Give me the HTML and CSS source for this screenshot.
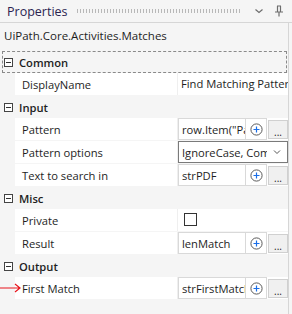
FILE: index.html
```html
<!DOCTYPE html>
<html lang="en">
  <head>
    <meta charset="UTF-8" />
    <title>Properties</title>
    <link rel="stylesheet" href="styles.css">
  </head>
  <body>
    <div class="panel">
      <div class="titlebar">
        <span class="title">Properties</span>
        <span class="grip"></span>
        <svg class="tb-icon" width="10" height="10" viewBox="0 0 10 10">
          <path d="M1.5 3.5 L5 6.5 L8.5 3.5" fill="none" stroke="#6d6d6d" stroke-width="1.2" />
        </svg>
        <svg class="tb-icon" width="10" height="12" viewBox="0 0 10 12">
          <path d="M3 1 H7 M3.5 1 V7 M6.5 1 V7 M1 7 H9 M5 7 V11.5" fill="none" stroke="#6d6d6d" stroke-width="1.2" />
        </svg>
      </div>

      <div class="typename">UiPath.Core.Activities.Matches</div>

      <div class="grid">
        <div class="category focused"><span class="toggle"></span>Common</div>
        <div class="prop">
          <div class="name">DisplayName</div>
          <div class="value"><span class="plain clip">Find Matching Patterns</span></div>
        </div>

        <div class="category"><span class="toggle"></span>Input</div>
        <div class="prop">
          <div class="name">Pattern</div>
          <div class="value">
            <span class="textbox"><span class="clip">row.Item("Pattern")</span></span>
            <span class="plus"><svg width="13" height="13" viewBox="0 0 13 13"><circle cx="6.5" cy="6.5" r="5.6" fill="none" stroke="#5a5a5a" stroke-width="1" /><path d="M6.5 3.5 V9.5 M3.5 6.5 H9.5" stroke="#1a6ee8" stroke-width="1.2" /></svg></span>
            <span class="dots">...</span>
          </div>
        </div>
        <div class="prop">
          <div class="name">Pattern options</div>
          <div class="value">
            <span class="combo">
              <span class="clip">IgnoreCase, Compiled</span>
              <svg class="caret" width="8" height="6" viewBox="0 0 8 6"><path d="M1 1.5 L4 4.5 L7 1.5" fill="none" stroke="#555" stroke-width="1" /></svg>
            </span>
          </div>
        </div>
        <div class="prop">
          <div class="name">Text to search in</div>
          <div class="value">
            <span class="textbox"><span class="clip">strPDF</span></span>
            <span class="plus"><svg width="13" height="13" viewBox="0 0 13 13"><circle cx="6.5" cy="6.5" r="5.6" fill="none" stroke="#5a5a5a" stroke-width="1" /><path d="M6.5 3.5 V9.5 M3.5 6.5 H9.5" stroke="#1a6ee8" stroke-width="1.2" /></svg></span>
            <span class="dots">...</span>
          </div>
        </div>

        <div class="category"><span class="toggle"></span>Misc</div>
        <div class="prop">
          <div class="name">Private</div>
          <div class="value"><span class="checkbox"></span></div>
        </div>
        <div class="prop">
          <div class="name">Result</div>
          <div class="value">
            <span class="textbox"><span class="clip">lenMatch</span></span>
            <span class="plus"><svg width="13" height="13" viewBox="0 0 13 13"><circle cx="6.5" cy="6.5" r="5.6" fill="none" stroke="#5a5a5a" stroke-width="1" /><path d="M6.5 3.5 V9.5 M3.5 6.5 H9.5" stroke="#1a6ee8" stroke-width="1.2" /></svg></span>
            <span class="dots">...</span>
          </div>
        </div>

        <div class="category"><span class="toggle"></span>Output</div>
        <div class="prop marked">
          <div class="name">First Match</div>
          <div class="value">
            <span class="textbox"><span class="clip">strFirstMatch</span></span>
            <span class="plus"><svg width="13" height="13" viewBox="0 0 13 13"><circle cx="6.5" cy="6.5" r="5.6" fill="none" stroke="#5a5a5a" stroke-width="1" /><path d="M6.5 3.5 V9.5 M3.5 6.5 H9.5" stroke="#1a6ee8" stroke-width="1.2" /></svg></span>
            <span class="dots">...</span>
          </div>
          <!-- flecha vermelha de anotação -->
          <svg class="arrow" width="22" height="10" viewBox="0 0 22 10">
            <path d="M0 5 H20 M15 1 L20 5 L15 9" fill="none" stroke="#e8141c" stroke-width="1.2" />
          </svg>
        </div>
      </div>
    </div>
  </body>
</html>
```

FILE: styles.css
```css
body {
  margin: 0;
  padding: 0;
  font-family: "Open Sans", "Noto Sans", sans-serif;
  font-size: 11.2px;
  color: #1e1e1e;
  background-color: #f5f5f5;
}

.panel {
  width: 292px;
  height: 314px;
  overflow: hidden;
  background-color: #f5f5f5;
}

.titlebar {
  height: 23px;
  display: flex;
  align-items: center;
  padding: 0 8px 0 7px;
  border-bottom: 1px solid #d6d6d6;
  box-sizing: border-box;
  gap: 6px;
}

.title {
  font-size: 12.5px;
  color: #2b2450;
}

.grip {
  flex: 1;
  height: 4px;
  margin: 0 4px 0 2px;
  background-image: radial-gradient(circle, #b8b8b8 0.6px, transparent 0.8px);
  background-size: 3px 2px;
}

.tb-icon {
  display: block;
  margin-left: 4px;
}

.typename {
  height: 28px;
  line-height: 26px;
  padding-left: 4px;
  font-size: 11.5px;
  border-right: 1px solid #d6d6d6;
  margin-right: 3px;
}

.grid {
  border-right: 1px solid #d6d6d6;
  margin-right: 3px;
  height: 263px;
}

.category {
  height: 22px;
  display: flex;
  align-items: center;
  padding-left: 4px;
  font-weight: 600;
  box-sizing: border-box;
}

.category.focused {
  border: 1px dashed #8a8a8a;
  margin: 0 1px 0 2px;
  padding-left: 1px;
}

.toggle {
  width: 9px;
  height: 9px;
  border: 1px solid #444;
  box-sizing: border-box;
  margin-right: 6px;
  position: relative;
  background-color: #fff;
}

.toggle::after {
  content: "";
  position: absolute;
  left: 1px;
  right: 1px;
  top: 3px;
  height: 1px;
  background-color: #333;
}

.prop {
  margin-left: 15px;
  height: 22px;
  margin-bottom: 1px;
  display: flex;
  background-color: #fff;
  position: relative;
}

.name {
  width: 163px;
  flex: none;
  box-sizing: border-box;
  padding-left: 7px;
  border-right: 1px solid #efefef;
  display: flex;
  align-items: center;
  white-space: nowrap;
}

.value {
  flex: 1;
  min-width: 0;
  display: flex;
  align-items: stretch;
  overflow: hidden;
  white-space: nowrap;
}

.plain {
  padding-left: 3px;
  line-height: 22px;
}

.textbox {
  width: 68px;
  flex: none;
  border: 1px solid #d9d9d9;
  box-sizing: border-box;
  padding-left: 3px;
  display: flex;
  align-items: center;
}

.clip {
  flex: 1;
  min-width: 0;
  overflow: hidden;
  white-space: nowrap;
}

.plus {
  width: 21px;
  flex: none;
  border: 1px solid #d9d9d9;
  border-left: none;
  box-sizing: border-box;
  display: flex;
  align-items: center;
  justify-content: center;
}

.dots {
  width: 20px;
  flex: none;
  margin: 2px 0 1px 1px;
  background-color: #f0f0f0;
  border: 1px solid #d0d0d0;
  box-sizing: border-box;
  font-size: 10px;
  line-height: 22px;
  text-align: center;
  overflow: hidden;
}

.combo {
  flex: 1;
  min-width: 0;
  border: 1px solid #7a7a7a;
  box-sizing: border-box;
  padding: 0 6px 0 3px;
  display: flex;
  align-items: center;
  gap: 6px;
}

.caret {
  display: block;
  flex: none;
}

.checkbox {
  width: 13px;
  height: 13px;
  border: 1px solid #333;
  box-sizing: border-box;
  margin: 4px 0 0 6px;
}

.arrow {
  position: absolute;
  left: -15px;
  top: 6px;
}
```
